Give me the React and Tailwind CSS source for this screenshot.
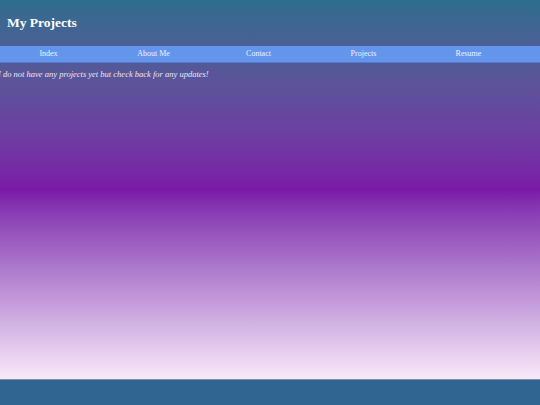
export default function App() {
  const links = ['Index', 'About Me', 'Contact', 'Projects', 'Resume'];
  return (
    <div className="flex h-[405px] flex-col" style={{ fontFamily: '"Liberation Serif", serif' }}>
      <div className="flex-1 bg-gradient-to-b from-[#2c6d8e] via-[#7a19a8] to-[#f8eaf8]">
        <header className="flex h-[46px] items-center px-[7px] pt-px">
          <h1 className="text-[13.5px] font-bold text-white">My Projects</h1>
        </header>
        <nav className="h-[17px] border-b border-[#5577d0] bg-[#6495ed]">
          <ul className="-ml-[4px] grid h-full w-[525px] grid-cols-5 items-center text-center text-[8px] text-[#eef2ff]">
            {links.map((l) => (
              <li key={l}>{l}</li>
            ))}
          </ul>
        </nav>
        <p className="-ml-[2px] mt-[5px] text-[8.5px] italic text-[#ece6f5]">
          I do not have any projects yet but check back for any updates!
        </p>
      </div>
      <footer className="h-[26px] border-t border-[#7a8fb0] bg-[#316591]"></footer>
    </div>
  );
}
